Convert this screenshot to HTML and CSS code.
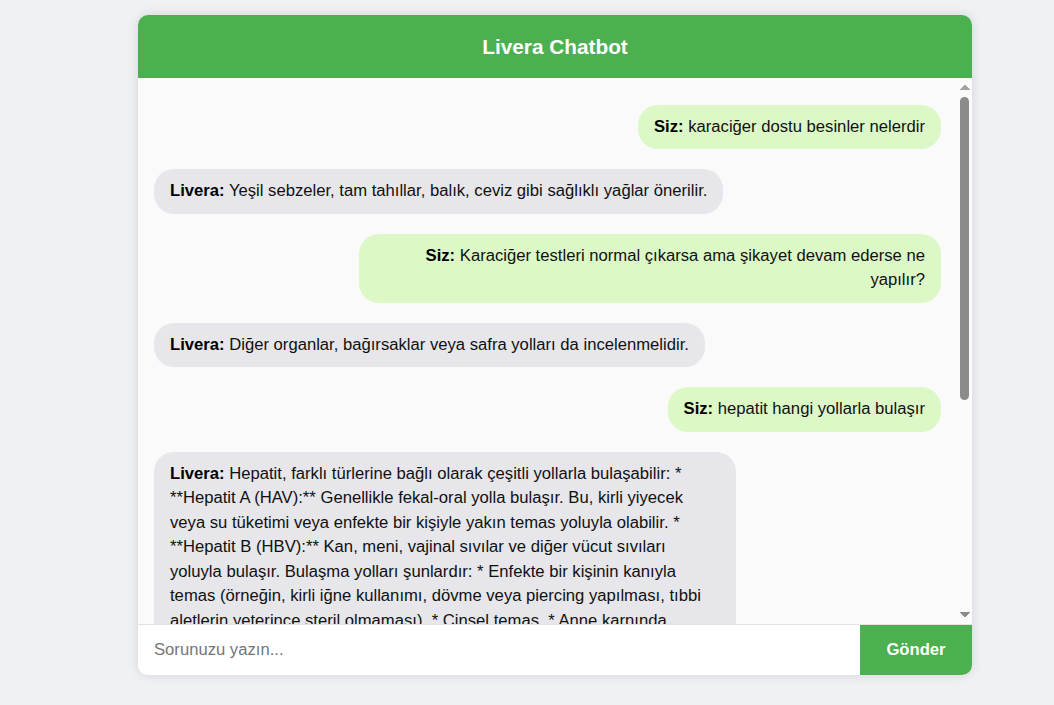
FILE: index.html
```html
<!DOCTYPE html>
<html lang="tr">
<head>
<meta charset="utf-8">
<title>Livera Chatbot</title>
<link rel="stylesheet" href="styles.css">
</head>
<body>
<div class="chat-container">
  <div class="chat-header">Livera Chatbot</div>
  <div class="chat-body">
    <div class="chat-box">
      <div class="msg user"><strong>Siz:</strong> karaciğer dostu besinler nelerdir</div>
      <div class="msg bot"><strong>Livera:</strong> Yeşil sebzeler, tam tahıllar, balık, ceviz gibi sağlıklı yağlar önerilir.</div>
      <div class="msg user"><strong>Siz:</strong> Karaciğer testleri normal çıkarsa ama şikayet devam ederse ne yapılır?</div>
      <div class="msg bot"><strong>Livera:</strong> Diğer organlar, bağırsaklar veya safra yolları da incelenmelidir.</div>
      <div class="msg user"><strong>Siz:</strong> hepatit hangi yollarla bulaşır</div>
      <div class="msg bot"><strong>Livera:</strong> Hepatit, farklı türlerine bağlı olarak çeşitli yollarla bulaşabilir: * **Hepatit A (HAV):** Genellikle fekal-oral yolla bulaşır. Bu, kirli yiyecek veya su tüketimi veya enfekte bir kişiyle yakın temas yoluyla olabilir. * **Hepatit B (HBV):** Kan, meni, vajinal sıvılar ve diğer vücut sıvıları yoluyla bulaşır. Bulaşma yolları şunlardır: * Enfekte bir kişinin kanıyla temas (örneğin, kirli iğne kullanımı, dövme veya piercing yapılması, tıbbi aletlerin yeterince steril olmaması). * Cinsel temas. * Anne karnında bulunan bebeğe, doğum sırasında anneden geçiş. * Ortak kullanılan tıraş bıçağı veya diş fırçası gibi kişisel eşyalar. * **Hepatit C (HCV):** Çoğunlukla kan yoluyla bulaşır. En yaygın bulaşma yolu, uyuşturucu kullanımında iğnelerin ortak kullanılmasıdır. Daha nadiren cinsel temas ve anneden bebeğe geçiş görülebilir. * **Hepatit D (HDV):** Sadece Hepatit B ile enfekte olan kişilerde görülür ve kan yoluyla bulaşır. * **Hepatit E (HEV):** Hepatit A gibi genellikle kirli su ve yiyecekler yoluyla fekal-oral yolla bulaşır.</div>
    </div>
    <div class="scrollbar" aria-hidden="true">
      <span class="sb-arrow sb-up"></span>
      <span class="sb-track"><span class="sb-thumb"></span></span>
      <span class="sb-arrow sb-down"></span>
    </div>
  </div>
  <div class="chat-input">
    <input type="text" class="input-field" placeholder="Sorunuzu yazın...">
    <button class="send-btn">Gönder</button>
  </div>
</div>
</body>
</html>
```
FILE: styles.css
```css
html, body {
  margin: 0;
  padding: 0;
}
body {
  background: #f0f1f4;
  font-family: "Liberation Sans", Arial, sans-serif;
  padding: 15px 0 0 138px;
  height: 705px;
  box-sizing: border-box;
  overflow: hidden;
}
.chat-container {
  width: 834px;
  height: 660px;
  background: #ffffff;
  border-radius: 10px;
  box-shadow: 0 0 12px rgba(0, 0, 0, 0.12);
  overflow: hidden;
  display: flex;
  flex-direction: column;
}
.chat-header {
  background: #4caf50;
  color: #ffffff;
  font-size: 20.8px;
  font-weight: bold;
  text-align: center;
  padding: 20px;
  line-height: 23px;
  flex: none;
}
.chat-body {
  flex: 1;
  min-height: 0;
  position: relative;
  background: #fafafa;
}
.chat-box {
  height: 100%;
  box-sizing: border-box;
  overflow-y: auto;
  scrollbar-width: none;
  padding: 26.5px 31px 20px 16px;
  display: flex;
  flex-direction: column;
  gap: 20px;
}
.chat-box::-webkit-scrollbar {
  display: none;
}
.scrollbar {
  position: absolute;
  top: 0;
  right: 0;
  bottom: 0;
  width: 15px;
  background: #fafafa;
  display: flex;
  flex-direction: column;
  align-items: center;
}
.sb-arrow {
  flex: none;
  width: 15px;
  height: 16px;
}
.sb-up {
  background: conic-gradient(from 140deg at 50% 0, #a3a3a3 0 80deg, transparent 80deg) 50% 60% / 10px 6px no-repeat;
}
.sb-down {
  background: conic-gradient(from -40deg at 50% 100%, #8b8b8b 0 80deg, transparent 80deg) 50% 40% / 10px 6px no-repeat;
}
.sb-track {
  flex: 1;
  width: 15px;
  display: flex;
  justify-content: center;
  padding-top: 3px;
}
.sb-thumb {
  width: 9px;
  height: 303px;
  border-radius: 5px;
  background: #8b8b8b;
}
.msg {
  flex: none;
  max-width: 582px;
  box-sizing: border-box;
  padding: 10px 16px;
  border-radius: 20px;
  font-size: 16.65px;
  line-height: 24.5px;
  color: #111111;
}
.msg strong {
  color: #000000;
}
.user {
  align-self: flex-end;
  background: #dcf8c6;
  text-align: right;
}
.bot {
  align-self: flex-start;
  background: #e6e6eb;
}
.chat-input {
  flex: none;
  display: flex;
  height: 51px;
  border-top: 1px solid #e2e2e2;
  box-sizing: border-box;
}
.input-field {
  flex: 1;
  border: none;
  outline: none;
  padding: 0 16px;
  font-family: "Liberation Sans", Arial, sans-serif;
  font-size: 16.65px;
  color: #111111;
  background: #ffffff;
}
.input-field::placeholder {
  color: #767676;
}
.send-btn {
  width: 112px;
  border: none;
  background: #4caf50;
  color: #ffffff;
  font-family: "Liberation Sans", Arial, sans-serif;
  font-size: 16.65px;
  font-weight: bold;
  cursor: pointer;
}
```
